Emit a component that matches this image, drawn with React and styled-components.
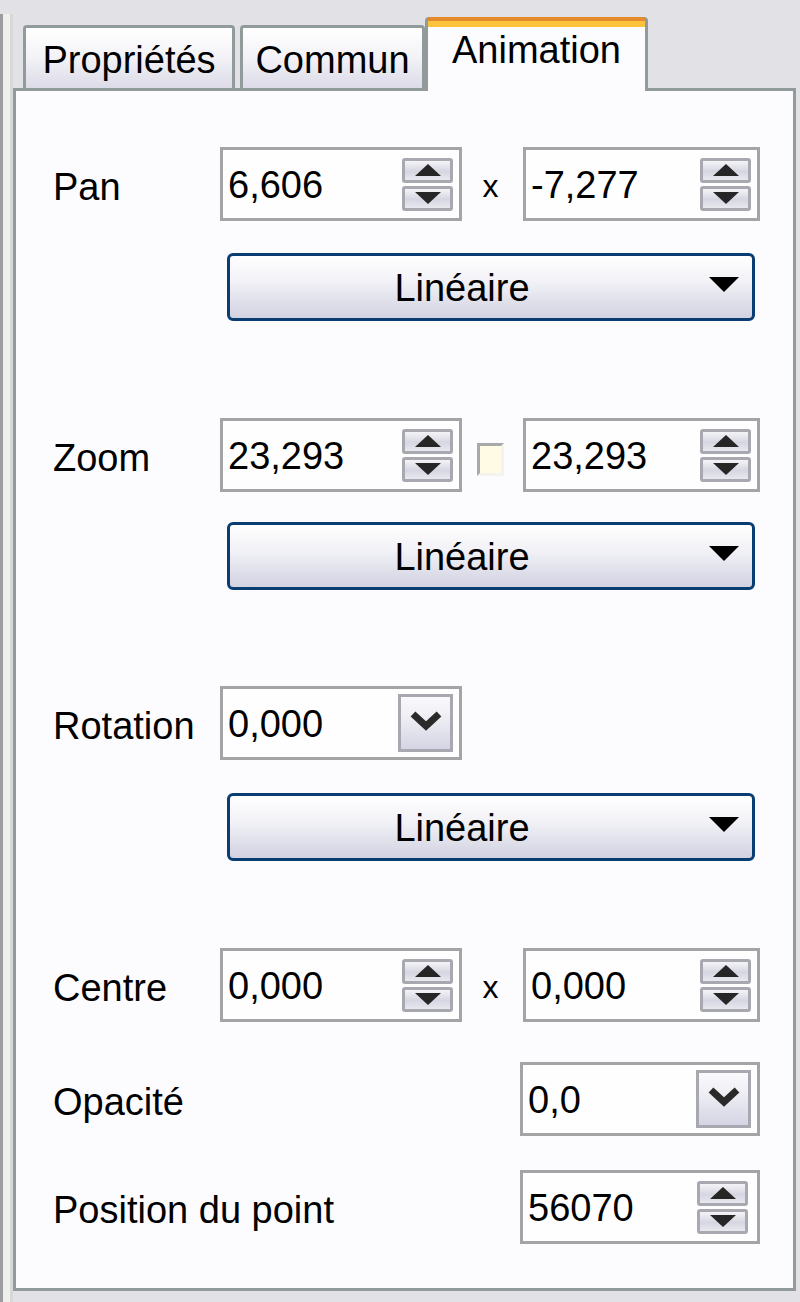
import React from 'react';
import styled, { createGlobalStyle } from 'styled-components';

const GlobalStyle = createGlobalStyle`
   html, body {
      margin: 0;
      padding: 0;
      background: #e2e1e6;
   }
   * {
      box-sizing: border-box;
   }
`;

const UpArrow = () => (
   <svg width="26" height="12" viewBox="0 0 26 12">
      <polygon points="0,12 13,0 26,12" fill="#262626" />
   </svg>
);

const DownArrow = () => (
   <svg width="26" height="12" viewBox="0 0 26 12">
      <polygon points="0,0 26,0 13,12" fill="#262626" />
   </svg>
);

const Chevron = () => (
   <svg width="32" height="20" viewBox="0 0 32 20">
      <polyline points="3,3 16,15 29,3" fill="none" stroke="#2a2a2a" strokeWidth="7" />
   </svg>
);

const ComboArrow = () => (
   <svg width="30" height="15" viewBox="0 0 30 15">
      <polygon points="0,0 30,0 15,15" fill="#000" />
   </svg>
);

const Spinner = ({ $mr }) => (
   <SpinColumn $mr={$mr}>
      <SpinButton>
         <UpArrow />
      </SpinButton>
      <SpinButton>
         <DownArrow />
      </SpinButton>
   </SpinColumn>
);

const NumberField = ({ value, width = 242, control = 'spin', mr }) => (
   <Field $width={width}>
      <FieldText>{value}</FieldText>
      {control === 'spin' ? (
         <Spinner $mr={mr} />
      ) : (
         <DropButton>
            <Chevron />
         </DropButton>
      )}
   </Field>
);

const Combo = ({ mt }) => (
   <ComboBox $mt={mt}>
      <ComboText>Linéaire</ComboText>
      <ComboArrowBox>
         <ComboArrow />
      </ComboArrowBox>
   </ComboBox>
);

const App = () => {
   return (
      <Page>
         <GlobalStyle />
         <LeftEdge />
         <Main>
            <TabRow>
               <Tab $width={212}>Propriétés</Tab>
               <Tab $width={185}>Commun</Tab>
               <ActiveTab>Animation</ActiveTab>
            </TabRow>
            <Panel>
               <Row $mt={56}>
                  <Label>Pan</Label>
                  <NumberField value="6,606" />
                  <Separator>x</Separator>
                  <NumberField value="-7,277" width={237} />
               </Row>
               <Combo mt={32} />

               <Row $mt={97}>
                  <Label>Zoom</Label>
                  <NumberField value="23,293" />
                  <Separator>
                     <CheckBox />
                  </Separator>
                  <NumberField value="23,293" width={237} />
               </Row>
               <Combo mt={30} />

               <Row $mt={96}>
                  <Label>Rotation</Label>
                  <NumberField value="0,000" control="drop" />
               </Row>
               <Combo mt={33} />

               <Row $mt={87}>
                  <Label>Centre</Label>
                  <NumberField value="0,000" />
                  <Separator>x</Separator>
                  <NumberField value="0,000" width={237} />
               </Row>

               <Row $mt={40}>
                  <WideLabel>Opacité</WideLabel>
                  <NumberField value="0,0" width={240} control="drop" />
               </Row>

               <Row $mt={34}>
                  <WideLabel>Position du point</WideLabel>
                  <NumberField value="56070" width={240} mr={9} />
               </Row>
            </Panel>
         </Main>
      </Page>
   );
};

const Page = styled.div`
   display: flex;
   width: 800px;
   height: 1302px;
   background: #e2e1e6;
   font-family: 'Liberation Sans', Arial, sans-serif;
   font-size: 38px;
   color: #000;
   overflow: hidden;
`;

const LeftEdge = styled.div`
   width: 13px;
   flex-shrink: 0;
   margin-top: 14px;
   background: linear-gradient(90deg, #9d9d9f 0 3px, #eef0eb 3px 10px, #d8d8d8 10px);
`;

const Main = styled.div`
   display: flex;
   flex-direction: column;
   width: 783px;
   padding-top: 17px;
`;

const TabRow = styled.div`
   display: flex;
   align-items: flex-end;
   height: 71px;
   padding-left: 10px;
   gap: 5px;
`;

const Tab = styled.div`
   width: ${(p) => p.$width}px;
   height: 63px;
   display: flex;
   justify-content: center;
   align-items: center;
   padding-top: 4px;
   border: 3px solid #919b9c;
   border-bottom: none;
   border-radius: 4px 4px 0 0;
   background: linear-gradient(180deg, #ffffff 0%, #f4f4f8 45%, #dcdbe8 100%);
   white-space: nowrap;
`;

const ActiveTab = styled.div`
   position: relative;
   z-index: 2;
   width: 223px;
   height: 74px;
   margin-left: -5px;
   margin-bottom: -3px;
   display: flex;
   justify-content: center;
   padding-top: 12px;
   border-left: 3px solid #919b9c;
   border-right: 3px solid #919b9c;
   border-radius: 4px 4px 0 0;
   background: linear-gradient(180deg, #e5892d 0 4px, #fbc23b 4px 10px, #fcfcfe 10px);
   white-space: nowrap;
`;

const Panel = styled.div`
   position: relative;
   z-index: 1;
   display: flex;
   flex-direction: column;
   height: 1203px;
   padding: 0 33px 0 37px;
   border: 3px solid #919b9c;
   background: #fcfcfe;
`;

const Row = styled.div`
   display: flex;
   align-items: center;
   height: 74px;
   margin-top: ${(p) => p.$mt}px;
   flex-shrink: 0;
`;

const Label = styled.div`
   width: 167px;
   flex-shrink: 0;
   padding-top: 6px;
   white-space: nowrap;
`;

const WideLabel = styled(Label)`
   flex: 1;
`;

const Field = styled.div`
   width: ${(p) => p.$width}px;
   height: 74px;
   flex-shrink: 0;
   display: flex;
   align-items: center;
   border: 3px solid #a4a4a6;
   background: #fefefe;
`;

const FieldText = styled.div`
   flex: 1;
   padding-left: 5px;
   padding-top: 2px;
   white-space: nowrap;
`;

const SpinColumn = styled.div`
   display: flex;
   flex-direction: column;
   gap: 3px;
   margin-right: ${(p) => p.$mr || 6}px;
`;

const SpinButton = styled.div`
   width: 51px;
   height: 25px;
   display: flex;
   justify-content: center;
   align-items: center;
   border: 3px solid #a8a8b0;
   border-radius: 3px;
   background: linear-gradient(180deg, #f4f4f7 0%, #d6d6e2 55%, #e8e8ef 100%);
`;

const DropButton = styled.div`
   width: 55px;
   height: 58px;
   margin-right: 6px;
   display: flex;
   justify-content: center;
   align-items: center;
   padding-bottom: 4px;
   border: 3px solid #a8a8b0;
   background: linear-gradient(180deg, #fafafc 0%, #eeeef4 40%, #d4d4e4 100%);
`;

const Separator = styled.div`
   width: 61px;
   flex-shrink: 0;
   display: flex;
   justify-content: center;
   align-items: center;
   padding-top: 4px;
   padding-right: 4px;
   font-size: 32px;
`;

const CheckBox = styled.div`
   width: 27px;
   height: 33px;
   margin-top: 4px;
   border: 3px solid;
   border-color: #a9a9a9 #f4f4ee #f4f4ee #a9a9a9;
   background: #fffbe4;
`;

const ComboBox = styled.div`
   width: 528px;
   height: 68px;
   margin-left: 174px;
   margin-top: ${(p) => p.$mt}px;
   flex-shrink: 0;
   display: flex;
   align-items: center;
   border: 3px solid #0a3d72;
   border-radius: 6px;
   background: linear-gradient(180deg, #ffffff 0%, #f2f2f7 40%, #d2d2e2 100%);
`;

const ComboText = styled.div`
   flex: 1;
   text-align: center;
   padding-left: 6px;
   padding-top: 2px;
`;

const ComboArrowBox = styled.div`
   width: 64px;
   display: flex;
   justify-content: center;
   padding-left: 8px;
   padding-bottom: 6px;
`;

export default App;
